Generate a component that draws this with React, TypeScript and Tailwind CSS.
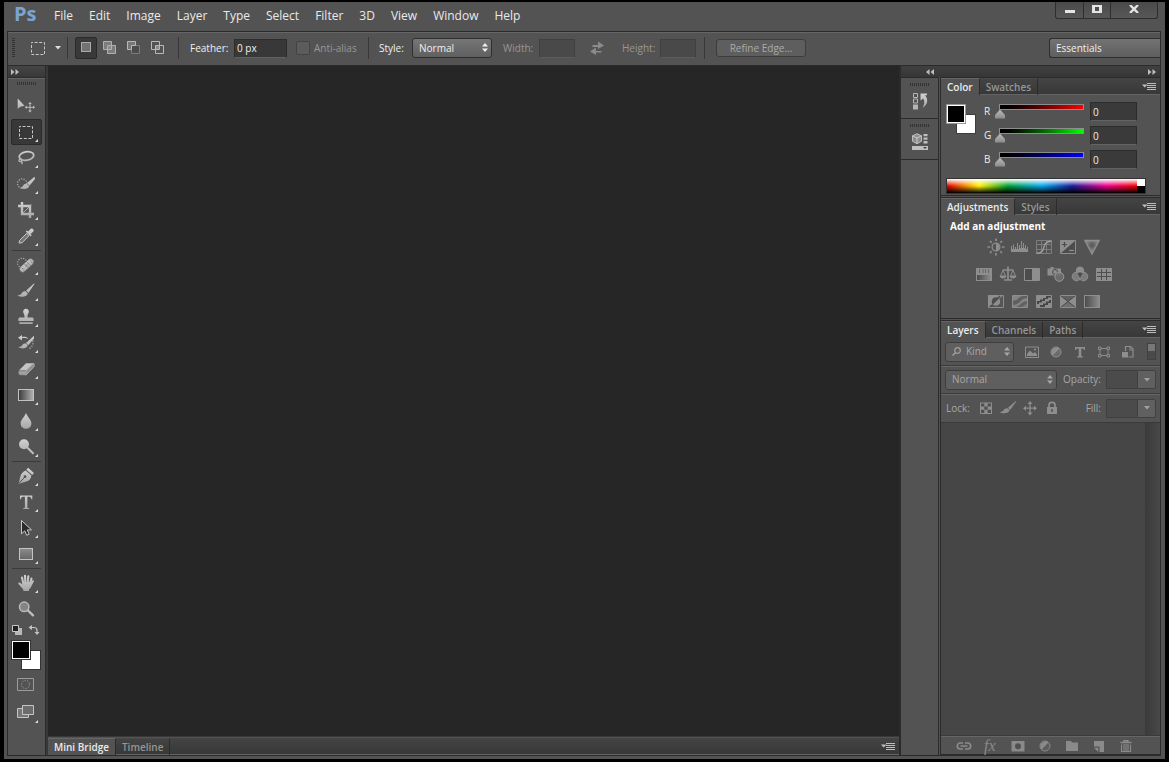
import type { ReactNode } from "react";
import clsx from "clsx";

const menus = ["File", "Edit", "Image", "Layer", "Type", "Select", "Filter", "3D", "View", "Window", "Help"];

const L = "url(#light)";
const G = "#8e8e8e";

function Icon({ children, className }: { children: ReactNode; className?: string }) {
    return (
        <svg viewBox="0 0 18 18" fill="none" aria-hidden="true" className={clsx("size-[18px] shrink-0", className)}>
            {children}
        </svg>
    );
}

/* gradients shared by every icon on the page */
function Gradients() {
    return (
        <svg className="absolute size-0" aria-hidden="true">
            <defs>
                <linearGradient id="light" gradientUnits="userSpaceOnUse" x1="0" y1="1" x2="0" y2="17">
                    <stop offset="0" stopColor="#d2d2d2" />
                    <stop offset="1" stopColor="#a6a6a6" />
                </linearGradient>
                <linearGradient id="box" x1="0" y1="0" x2="0" y2="1">
                    <stop offset="0" stopColor="#8b8b8b" />
                    <stop offset="1" stopColor="#666" />
                </linearGradient>
                <linearGradient id="ramp">
                    <stop offset="0" stopColor="#3a3a3a" />
                    <stop offset="1" stopColor="#b4b4b4" />
                </linearGradient>
                <linearGradient id="rampDim">
                    <stop offset="0" stopColor="#4a4a4a" />
                    <stop offset="1" stopColor="#8e8e8e" />
                </linearGradient>
                <radialGradient id="vibrance" cx=".5" cy=".35" r=".5">
                    <stop offset="0" stopColor="#555" />
                    <stop offset="1" stopColor="#8e8e8e" />
                </radialGradient>
            </defs>
        </svg>
    );
}

const brush = (
    <>
        <path d="M17.3 1.2 9.2 8.6l2.2 2.3 6-8.9z" fill={L} />
        <path d="M8.6 9.3c-1.4-.2-2.7.3-3.5 1.5-.8 1.3-2 2.2-4.6 2.5 2.2 1.6 5.8 2.1 8.2.8 1.3-.7 1.9-1.7 2-2.8z" fill={L} />
    </>
);

const marquee = <rect x="2.5" y="3.5" width="13" height="12" stroke="#c8c8c8" strokeDasharray="3 1.6" strokeDashoffset="1.5" />;

type Tool = { name: string; icon: ReactNode; single?: boolean };

const toolGroups: Tool[][] = [
    [
        {
            name: "Move",
            single: true,
            icon: (
                <>
                    <path d="M.7 1.5v10.6l2.6-2.4 4.2-.9z" fill={L} />
                    <path d="M13 6v8.6M8.8 10.3h8.4" stroke="#bbb" />
                    <path d="m13 5-1.8 2h3.6zM13 15.6l-1.8-2h3.6zM7.800 10.3l2-1.8v3.6zM18 10.3l-2-1.8v3.6z" fill="#bbb" />
                </>
            ),
        },
        { name: "Rectangular Marquee", icon: marquee },
        {
            name: "Lasso",
            icon: (
                <>
                    <ellipse cx="9.5" cy="7" rx="7.3" ry="4.2" transform="rotate(-9 9.5 7)" stroke={L} strokeWidth="1.8" />
                    <path d="M3 10c-1.6.7-1.4 2.4.3 2.5 1.4 0 2-.9 1-1.7M4 12.200c1.4.8 1.7 1.7.6 3" stroke="#b8b8b8" strokeWidth="1.3" />
                </>
            ),
        },
        {
            name: "Quick Selection",
            icon: (
                <>
                    <circle cx="5.2" cy="8.500" r="4.6" stroke="#bbb" strokeWidth="1.2" strokeDasharray="1.1 1.4" />
                    <path d="m17.500 1.800-7.500 6.200 2.400 2.700L18 4z" fill={L} />
                    <path d="M9.600 8.800c-1.700-.2-2.800.7-3.400 1.800-.5 1-1.400 1.700-2.800 2.300 2.100 1.400 5.400 1.500 7.200.2 1-.6 1.500-1.400 1.500-2.200z" fill={L} />
                </>
            ),
        },
        {
            name: "Crop",
            icon: (
                <>
                    <path d="M5 1v12h12M1 5h12v12" stroke={L} strokeWidth="2.4" />
                    <path d="m5.5 12.5 9-9" stroke="#b5b5b5" strokeWidth=".9" />
                </>
            ),
        },
        {
            name: "Eyedropper",
            icon: (
                <>
                    <path d="m2 16 .6-2.6 7-7 2.4 2.4-7 7z" stroke="#c8c8c8" fill="#777" />
                    <path d="m8.7 4.6 4.9 4.9 1.2-1.2-1.1-1.2 2.7-2.7c1.2-1.3-1.3-3.8-2.6-2.6l-2.7 2.7-1.2-1.1z" fill={L} />
                </>
            ),
        },
    ],
    [
        {
            name: "Spot Healing Brush",
            icon: (
                <>
                    <circle cx="5.3" cy="7" r="4.7" stroke="#bbb" strokeWidth="1.1" strokeDasharray="1.1 1.4" />
                    <rect x="1.2" y="6.2" width="17" height="6.4" rx="3.2" transform="rotate(-43 9.7 9.4)" fill={L} stroke="#535353" strokeWidth=".5" />
                    <path d="m7 7.5 4.7 4.7M9.4 5.3l4.7 4.7" stroke="#777" strokeWidth=".7" />
                    <path d="M10 7.8v.9M9 9.5v.9M11 9.5v.9M13.8 4.5v.9M15 6v.9M5.5 12v.9M6.8 13.5v.8" stroke="#666" />
                </>
            ),
        },
        { name: "Brush", icon: brush },
        {
            name: "Clone Stamp",
            icon: (
                <path
                    d="M9 .8a2.9 2.9 0 0 0-2.7 3.9c.5 1.2 1.2 2 1.2 3.3v1.4H3c-1 0-1.6.6-1.6 1.6v2h15.2v-2c0-1-.6-1.6-1.6-1.6h-4.5V8c0-1.300.7-2.1 1.2-3.3A2.9 2.9 0 0 0 9 .8zM2.3 14.3h13.4V16H2.3z"
                    fill={L}
                />
            ),
        },
        {
            name: "History Brush",
            icon: (
                <>
                    <path d="M1 3.8 5 1v1.9c3-.5 5 .1 6.3 1.8-2.1-.9-4-.9-6.3-.6v2.3z" fill={L} />
                    <path d="m17 1.8-8 7.100 2.300 2.300L17 4.500z" fill={L} />
                    <path d="M8.8 9.6c-1.4-.2-2.7.3-3.4 1.3-.8 1.1-1.8 1.9-4.2 2.1 2 1.4 5.3 1.9 7.5.8 1.3-.6 1.8-1.4 1.9-2.5z" fill={L} />
                    <path d="M15.7 6.5c1 3.3-.4 6.7-4 8.4" stroke="#bbb" strokeWidth="1.2" strokeDasharray="1.2 1.5" />
                </>
            ),
        },
        {
            name: "Eraser",
            icon: (
                <>
                    <path d="M9 3.2h7.6l-7.8 7.6H1.6z" fill="#c4c4c4" />
                    <path d="M1.6 10.8h7.2v4.4H2.9c-1.4 0-1.9-2-1.3-4.4z" fill="#a2a2a2" stroke="#555" strokeWidth=".5" />
                    <path d="m8.8 10.8 7.8-7.6c.9 1 .9 3-.1 4.1l-7.7 7.9z" fill="#8f8f8f" stroke="#c4c4c4" strokeWidth=".7" />
                </>
            ),
        },
        { name: "Gradient", icon: <rect x="1.5" y="3.5" width="15" height="11" fill="url(#ramp)" stroke="#c2c2c2" /> },
        { name: "Blur", icon: <path d="M9 .8c.8 3.4 5.4 7 5.4 10.6a5.4 5.4 0 0 1-10.8 0C3.6 7.8 8.2 4.2 9 .8z" fill={L} /> },
        {
            name: "Dodge",
            icon: (
                <>
                    <circle cx="7" cy="6.3" r="5" fill={L} />
                    <path d="m10.5 9.8 5.5 5.4" stroke="#bdbdbd" strokeWidth="2" strokeLinecap="round" />
                </>
            ),
        },
    ],
    [
        {
            name: "Pen",
            icon: (
                <>
                    <path d="m11.2.8 5.8 5.3-1.7 2-6-5.4z" fill={L} />
                    <path d="m8.7 3.5 5.7 5.1c-.3 3.2-2 5.2-5 5.9l-7.7 2.2 1.6-7.2c.7-2.7 2.5-4.8 5.4-6z" fill={L} />
                    <path d="m2.3 16 5.2-5.6" stroke="#535353" />
                    <circle cx="8" cy="9.7" r="1.4" fill="#535353" />
                </>
            ),
        },
        {
            name: "Horizontal Type",
            icon: <path d="M3 2.5h12.3v3.8h-.9c-.3-1.9-1-2.500-3-2.500h-1v10.1c0 .9.4 1.2 1.900 1.3v.8H6v-.8c1.5-.1 1.9-.4 1.9-1.3V3.8h-1c-2 0-2.7.6-3 2.5H3z" fill={L} />,
        },
        { name: "Path Selection", icon: <path d="M4.5 1.5v13.3l3.3-3 1.9 4.5 2.5-1.1-1.9-4.3h4.2z" fill="#2b2b2b" stroke="#c8c8c8" /> },
        { name: "Rectangle", icon: <rect x="2.5" y="3.5" width="13" height="11" fill="url(#box)" stroke="#c4c4c4" /> },
    ],
    [
        {
            name: "Hand",
            icon: (
                <>
                    <path d="M6.2 9 5 3.5M8.3 8.500 8 1.8M10.7 8.5l.6-6.200M13 9.5l1.5-5" stroke={L} strokeWidth="2.1" strokeLinecap="round" />
                    <path d="M5.2 8h8.9l1.3-1.6c.8-.5 1.8.1 1.4 1.1l-2.2 4.2c-.7 1.7-1.6 3-2.6 3.7v1.7H6.3v-1.5L1.5 10c-.7-1.2.7-2 1.7-1.3l2.2 1.8z" fill={L} />
                </>
            ),
        },
        {
            name: "Zoom",
            single: true,
            icon: (
                <>
                    <circle cx="7.2" cy="6.8" r="4.7" fill="#848484" stroke="#b9b9b9" strokeWidth="1.5" />
                    <path d="m11 10.5 5 4.8" stroke="#bdbdbd" strokeWidth="2.4" strokeLinecap="round" />
                </>
            ),
        },
    ],
];

const adjustments: Tool[][] = [
    [
        {
            name: "Brightness/Contrast",
            icon: (
                <>
                    <circle cx="9" cy="9" r="3.9" stroke={G} strokeWidth="1.3" />
                    <path d="M9 5.5v7a3.5 3.5 0 0 0 0-7z" fill={G} />
                    <path d="M9 .5V3M9 15v2.5M.5 9H3M15 9h2.5M3 3l1.7 1.7M13.3 13.3 15 15M3 15l1.7-1.7M13.3 4.7 15 3" stroke={G} strokeWidth="1.7" />
                </>
            ),
        },
        {
            name: "Levels",
            icon: <path d="M0 14V8h1v3h1V6.5h1V11h1V9h1v2h1V5h1v6h1V7h1v3h1V3h1v7h1V5h1v5h1V7h1v4h1V9h1v5z" fill={G} />,
        },
        {
            name: "Curves",
            icon: (
                <>
                    <path d="M1.5 2.5h15v13h-15zM6.5 2.5v13M11.5 2.5v13M1.5 6.5h15M1.5 11.5h15" stroke="#7d7d7d" />
                    <path d="M1.5 15.2c7.5 0 6.5-5 8-8 1.3-2.8 3.5-4 7-4" stroke="#a0a0a0" strokeWidth="1.4" />
                </>
            ),
        },
        {
            name: "Exposure",
            icon: (
                <>
                    <path d="M1.5 2.5h15v13h-15z" stroke={G} fill="#4c4c4c" />
                    <path d="M1.5 2.5h15l-15 13z" fill={G} />
                    <path d="M3 6.5h5M5.5 4v5" stroke="#4b4b4b" strokeWidth="1.2" />
                    <path d="M10 12.5h5" stroke={G} strokeWidth="1.2" />
                </>
            ),
        },
        { name: "Vibrance", icon: <path d="M1.8 2.5h14.4L9 16z" fill="url(#vibrance)" stroke={G} strokeWidth="1.3" /> },
    ],
    [
        {
            name: "Hue/Saturation",
            icon: (
                <>
                    <path d="M1 3h16v13H1z" fill={G} />
                    <path d="M4.500 4v4M8 4v4M10.5 4v4M13.5 4v4" stroke="#666" />
                    <path d="M2 10h14v5H2z" fill="url(#rampDim)" />
                </>
            ),
        },
        {
            name: "Color Balance",
            icon: (
                <>
                    <path d="M9 1.5v13M3.5 5h11M5 15h8" stroke={G} strokeWidth="1.7" />
                    <path d="M4 5.5 1.5 11h5zM14 5.5 11.5 11h5z" stroke={G} />
                    <path d="M.6 11h6.8c0 3.3-6.8 3.3-6.8 0zM10.6 11h6.8c0 3.3-6.8 3.3-6.8 0z" fill={G} />
                </>
            ),
        },
        {
            name: "Black & White",
            icon: (
                <>
                    <path d="M1.5 3.5h15v12h-15z" stroke={G} fill="#4c4c4c" />
                    <path d="M9 3.5h7.5v12H9z" fill={G} />
                </>
            ),
        },
        {
            name: "Photo Filter",
            icon: (
                <>
                    <path d="M.5 3.5h3V2h3v1.5H14v7H.5z" fill={G} />
                    <circle cx="8" cy="7" r="2.5" stroke="#4e4e4e" />
                    <circle cx="12.3" cy="11.8" r="4.5" fill="#727272" fillOpacity=".8" stroke="#999" />
                </>
            ),
        },
        {
            name: "Channel Mixer",
            icon: (
                <>
                    <circle cx="9" cy="5.8" r="4.2" fill={G} />
                    <circle cx="5.5" cy="11.5" r="4.3" fill="#7c7c7c" stroke={G} />
                    <circle cx="12.5" cy="11.5" r="4.3" fill="#7c7c7c" stroke={G} />
                    <path d="M6.5 8.2 9 7.2l2.5 1L9 13z" fill="#4c4c4c" />
                </>
            ),
        },
        {
            name: "Color Lookup",
            icon: (
                <>
                    <path d="M1 3h16v13H1z" fill={G} />
                    <path d="M6.5 4v11M11.5 4v11M2 7.5h14M2 11.5h14" stroke="#4e4e4e" />
                </>
            ),
        },
    ],
    [
        {
            name: "Invert",
            icon: (
                <>
                    <path d="M1.5 3.5h15v12h-15z" stroke={G} fill="#555" />
                    <path d="M1.5 3.5h14.500l-14.5 12z" fill={G} />
                    <circle cx="9" cy="9.5" r="4.300" fill="#4d4d4d" />
                    <path d="M6 12.5a4.200 4.200 0 0 0 6-6z" fill={G} />
                    <path d="m13 4-2 2M5 13l-2 2" stroke="#4d4d4d" strokeWidth="1.500" />
                </>
            ),
        },
        {
            name: "Posterize",
            icon: (
                <>
                    <path d="M1.5 3.5h15v12h-15z" fill="#606060" stroke={G} />
                    <path d="M2 8.500c5 0 5-3.500 10-4.500H2zM2 13c8-.5 6-5.500 14-7v3c-7 1-6 5.500-13 6H2z" fill="#858585" />
                    <path d="M10 15c2-.500 3-2.500 6-3.500V15z" fill="#787878" />
                </>
            ),
        },
        {
            name: "Threshold",
            icon: (
                <>
                    <path d="M1.5 3.5h15v12h-15z" fill={G} stroke={G} />
                    <path d="M2 9h3V7.500h3V6h3V4h5v1.500h-3V7h-3v2H7v1.500H4V12H2zM5 15v-2h3v-1.500h3V9.500h3V8h2v3h-3v2h-3v2z" fill="#464646" />
                </>
            ),
        },
        {
            name: "Selective Color",
            icon: (
                <>
                    <path d="M1.5 3.5h15v12h-15z" stroke={G} fill="#707070" />
                    <path d="M2 4h14L9 9.500z" fill="#606060" />
                    <path d="M1.5 3.5 9 9.5l-7.5 6zM16.5 3.5 9 9.5l7.5 6z" fill={G} />
                    <path d="m2 4 14 11M16 4 2 15" stroke="#484848" />
                </>
            ),
        },
        { name: "Gradient Map", icon: <rect x="1.5" y="3.5" width="15" height="12" fill="url(#rampDim)" stroke={G} /> },
    ],
];

const footerIcons: Tool[] = [
    {
        name: "Link layers",
        icon: <path d="M8 6H5.300a3 3 0 0 0 0 6H8M10 6h2.700a3 3 0 0 1 0 6H10M5.5 9h7" stroke="#8a8a8a" strokeWidth="1.7" />,
    },
    {
        name: "Layer style",
        icon: (
            <text x="2" y="14" fill="#8a8a8a" fontFamily="Liberation Serif, serif" fontStyle="italic" fontSize="16">
                fx
            </text>
        ),
    },
    {
        name: "Add mask",
        icon: (
            <>
                <path d="M2.5 4h13v10.5h-13z" fill="#8a8a8a" />
                <circle cx="9" cy="9.2" r="3" fill="#505050" />
            </>
        ),
    },
    {
        name: "New adjustment layer",
        icon: (
            <>
                <circle cx="9" cy="9" r="5" fill="#5c5c5c" stroke="#8a8a8a" />
                <path d="M5.5 12.5a5 5 0 0 1 7-7z" fill="#8a8a8a" />
            </>
        ),
    },
    { name: "New group", icon: <path d="M3 4h5l1 1.5h6V14H3z" fill="#8a8a8a" /> },
    { name: "New layer", icon: <path d="M4 4h10v11H9.5V9.5H4zM4 10.7h4.3V15z" fill="#8a8a8a" /> },
    {
        name: "Delete layer",
        icon: (
            <>
                <path d="M3.500 5.5h11M7 5V3.7h4V5" stroke="#8a8a8a" strokeWidth="1.4" />
                <path d="M4.5 7.5v7h9v-7M7 7v7M9 7v7M11 7v7" stroke="#8a8a8a" strokeWidth="1.1" />
            </>
        ),
    },
];

const layerFilters: Tool[] = [
    {
        name: "Filter pixel layers",
        icon: (
            <>
                <path d="M2.5 4h13v10.5h-13z" stroke={G} />
                <path d="M4 13v-2l3-3.5 3 3 2-1.5 2 2.5V13z" fill={G} />
                <circle cx="12" cy="6.5" r="1.1" fill={G} />
            </>
        ),
    },
    {
        name: "Filter adjustment layers",
        icon: (
            <>
                <circle cx="9" cy="9" r="5" fill="#6b6b6b" stroke={G} />
                <path d="M5.5 12.5a5 5 0 0 1 7-7z" fill={G} />
            </>
        ),
    },
    { name: "Filter type layers", icon: <path d="M4 4h10v3h-1c-.2-1.2-.7-1.6-2.7-1.6V13l1.5.6v.9H6.2v-.9l1.5-.6V5.4C5.7 5.4 5.2 5.8 5 7H4z" fill={G} /> },
    {
        name: "Filter shape layers",
        icon: (
            <>
                <path d="M5 5.5h8v7H5z" stroke={G} />
                <path d="M3.5 4H6v2.5H3.5zM12 4h2.5v2.5H12zM3.5 11.5H6V14H3.5zM12 11.5h2.5V14H12z" fill="#535353" stroke={G} />
            </>
        ),
    },
    {
        name: "Filter smart objects",
        icon: (
            <>
                <path d="M6.5 8V3.5h5L14 6v8H9.5" stroke={G} strokeWidth="1.2" />
                <path d="M11 3.5V7h3" stroke={G} />
                <path d="M3 9h6v5.5H3z" fill={G} />
            </>
        ),
    },
];

const locks: Tool[] = [
    {
        name: "Lock transparent pixels",
        icon: (
            <>
                <path d="M3 3.5h12V15H3z" fill={G} />
                <path d="M4 4.5h3.3v3H4zM10.6 4.5H14v3h-3.4zM7.3 7.5h3.3v3.3H7.3zM4 10.8h3.3V14H4zM10.6 10.8H14V14h-3.4z" fill="#505050" />
            </>
        ),
    },
    {
        name: "Lock image pixels",
        icon: <path d="M16.8 2 9 8.7l2 2.2 6-8zM8.5 9.3c-2-.2-3 .6-3.7 1.7-.7 1-1.8 1.8-4 2.2 3 1.8 9.2 1.5 9.7-1.9z" fill={G} />,
    },
    {
        name: "Lock position",
        icon: (
            <>
                <path d="M9 4v10.5M3.7 9.2h10.6" stroke={G} strokeWidth="1.3" />
                <path d="M9 2 6.5 5h5zM9 16.5l-2.5-3h5zM2 9.2l3-2.5v5zM16 9.2l-3-2.5v5z" fill={G} />
            </>
        ),
    },
    {
        name: "Lock all",
        icon: (
            <>
                <path d="M6 8V6c0-3.5 6-3.5 6 0v2" stroke={G} strokeWidth="1.7" />
                <path d="M4 8h10v7H4z" fill={G} />
                <path d="M9 10v3" stroke="#505050" strokeWidth="1.5" />
            </>
        ),
    },
];

const channels = [
    { name: "R", track: "from-black to-[#ff0000]" },
    { name: "G", track: "from-black to-[#00ff00]" },
    { name: "B", track: "from-black to-[#0000ff]" },
];

function Sorter() {
    return (
        <svg viewBox="0 0 6 9" aria-hidden="true" className="pointer-events-none absolute right-1 top-[5px] h-[9px] w-[6px]">
            <path d="M3 0 0 3.5h6zM3 9 0 5.5h6z" fill="currentColor" />
        </svg>
    );
}

function Chevrons({ left }: { left?: boolean }) {
    return (
        <svg viewBox="0 0 8 6" aria-hidden="true" className={clsx("h-[6px] w-2", left && "rotate-180")}>
            <path d="m0 0 3.5 3L0 6zM4.5 0 8 3 4.5 6z" fill="#bdbdbd" />
        </svg>
    );
}

function PanelMenu() {
    return (
        <button type="button" aria-label="Panel menu" className="ml-auto mr-1 flex items-center">
            <svg viewBox="0 0 14 9" className="h-[9px] w-[14px]">
                <path d="M0 2.5h5.5L2.7 5.5z" fill="#bdbdbd" />
                <path d="M5 1.5h9M5 3.5h9M5 5.5h9M5 7.5h9" stroke="#bdbdbd" />
            </svg>
        </button>
    );
}

function Tabs({ items }: { items: string[] }) {
    return (
        <div role="tablist" className="flex h-[17px] shrink-0 border-b border-[#646464] bg-linear-to-b from-[#444] to-[#383838]">
            {items.map((item, i) => (
                <button
                    key={item}
                    type="button"
                    role="tab"
                    aria-selected={i === 0}
                    className={clsx(
                        "h-[17px] border-r border-t border-r-[#2c2c2c] px-[6px] pb-px font-semibold leading-[14px]",
                        i === 0 ? "border-t-[#666] bg-[#535353] text-[#ececec]" : "border-t-[#484848] text-[#969696]",
                    )}
                >
                    {item}
                </button>
            ))}
            <PanelMenu />
        </div>
    );
}

function Grip() {
    return <div className="h-[3px] w-[19px] bg-[repeating-linear-gradient(90deg,#333_0_1px,transparent_1px_2px)]" />;
}

function Divider() {
    return <div className="h-[22px] w-px shrink-0 bg-[#383838]" />;
}

function IconButton({ tool }: { tool: Tool }) {
    return (
        <button type="button" aria-label={tool.name}>
            <Icon>{tool.icon}</Icon>
        </button>
    );
}

function TitleBar() {
    return (
        <header className="flex h-[29px] pl-[10px] pr-[7px]">
            <span className="w-[32px] text-[20px] font-bold leading-[24px] text-[#7ba4d2]">Ps</span>
            <nav className="flex flex-1 items-center gap-4 pb-[2px] pl-2 text-[12px] text-[#eaeaea]">
                {menus.map((menu) => (
                    <button type="button" key={menu} className="leading-[16px]">
                        {menu}
                    </button>
                ))}
            </nav>
            <div className="flex h-[17px] rounded-b-[3px] border border-t-0 border-[#2e2e2e] bg-linear-to-b from-[#4a4a4a] to-[#575757]">
                <button type="button" aria-label="Minimize" className="flex w-[28px] justify-center border-r border-[#2e2e2e] pt-2">
                    <span className="h-[3px] w-[10px] bg-[#e4e4e4]" />
                </button>
                <button type="button" aria-label="Maximize" className="flex w-[27px] justify-center border-r border-[#2e2e2e] pt-[3px]">
                    <span className="h-2 w-[10px] border-x-[3px] border-y-2 border-[#e4e4e4]" />
                </button>
                <button type="button" aria-label="Close" className="flex w-[46px] justify-center pt-[3px]">
                    <svg viewBox="0 0 10 8" className="h-2 w-[10px]">
                        <path d="m1 0 8 8M9 0 1 8" stroke="#e4e4e4" strokeWidth="2.4" />
                    </svg>
                </button>
            </div>
        </header>
    );
}

function OptionsBar() {
    return (
        <div className="flex h-[33px] items-center border-t border-[#666] pb-[2px] pl-1 text-[#f0f0f0]">
            <div className="h-5 w-[3px] bg-[repeating-linear-gradient(#333_0_1px,transparent_1px_2px)]" />
            <button type="button" aria-label="Tool preset" className="ml-[14px] flex items-center gap-2">
                <Icon>{marquee}</Icon>
                <svg viewBox="0 0 6 4" className="h-1 w-[6px]">
                    <path d="M0 0h6L3 3.5z" fill="#ddd" />
                </svg>
            </button>
            <div className="ml-[6px] flex items-center">
                <Divider />
                <div className="ml-[7px] flex items-center gap-[3px]">
                    <button type="button" aria-label="New selection" className="flex size-[22px] items-center justify-center rounded-[2px] border border-[#2a2a2a] bg-[#393939]">
                        <Icon>
                            <rect x="4.5" y="3.5" width="9" height="9" fill="#727272" stroke="#aaa" />
                        </Icon>
                    </button>
                    <div className="flex gap-[6px]">
                        <button type="button" aria-label="Add to selection">
                            <Icon>
                                <path d="M3.5 2.5h8v8h-8zM7.5 6.5h8v8h-8z" fill="#7c7c7c" stroke="#b0b0b0" />
                                <path d="M8 7h3v3H8z" fill="#8c8c8c" />
                            </Icon>
                        </button>
                        <button type="button" aria-label="Subtract from selection">
                            <Icon>
                                <path d="M7.5 6.5h8v8h-8z" fill="#4c4c4c" stroke="#7b7b7b" />
                                <path d="M7.5 10.5h-4v-8h8v4h-4z" fill="#777" stroke="#b8b8b8" />
                            </Icon>
                        </button>
                        <button type="button" aria-label="Intersect with selection">
                            <Icon>
                                <path d="M3.5 2.5h8v8h-8zM7.5 6.5h8v8h-8z" stroke="#b8b8b8" />
                                <path d="M8 7h3v3H8z" fill="#8c8c8c" />
                            </Icon>
                        </button>
                    </div>
                </div>
            </div>
            <div className="ml-3 flex items-center">
                <Divider />
                <label htmlFor="feather" className="ml-[11px] w-11 whitespace-nowrap">
                    Feather:
                </label>
                <input id="feather" defaultValue="0 px" className="h-[19px] w-[53px] border border-[#2c2c2c] border-b-[#606060] bg-[#383838] px-[2px]" />
                <label className="ml-[9px] flex w-[60px] items-center gap-1 whitespace-nowrap text-[#979797]">
                    <input type="checkbox" disabled className="size-[14px] shrink-0 appearance-none rounded-[2px] border border-[#434343] bg-[#5c5c5c]" />
                    Anti-alias
                </label>
            </div>
            <div className="ml-3 flex items-center">
                <Divider />
                <label htmlFor="style" className="ml-[10px] w-[33px]">
                    Style:
                </label>
                <div className="relative">
                    <select id="style" className="block h-5 w-20 appearance-none rounded-[3px] border border-[#2f2f2f] bg-linear-to-b from-[#767676] to-[#606060] px-[6px]">
                        <option>Normal</option>
                    </select>
                    <Sorter />
                </div>
                <label htmlFor="width" className="ml-[11px] w-9 text-[#979797]">
                    Width:
                </label>
                <input id="width" disabled className="h-[19px] w-9 border border-[#404040] border-b-[#5c5c5c] bg-[#494949]" />
                <button type="button" aria-label="Swap width and height" className="ml-[13px]">
                    <Icon>
                        <path d="M4.5 6H10V2.500l6 4-6 3.500V8H4.5zM13.500 13.500H8v2.500l-6-3.500 6-4v3.500h5.500z" fill="#8b8b8b" />
                    </Icon>
                </button>
                <label htmlFor="height" className="ml-4 w-[38px] text-[#979797]">
                    Height:
                </label>
                <input id="height" disabled className="h-[19px] w-9 border border-[#404040] border-b-[#5c5c5c] bg-[#494949]" />
            </div>
            <div className="ml-2 flex items-center">
                <Divider />
                <button type="button" className="ml-[11px] h-[18px] w-[90px] rounded-[3px] border border-[#3d3d3d] bg-[#5e5e5e] leading-[14px] text-[#aaa]">
                    Refine Edge...
                </button>
            </div>
            <select aria-label="Workspace" className="ml-auto h-5 w-[111px] appearance-none rounded-l-[3px] border border-r-0 border-[#2f2f2f] bg-linear-to-b from-[#737373] to-[#5e5e5e] px-[6px]">
                <option>Essentials</option>
            </select>
        </div>
    );
}

function Toolbox() {
    return (
        <aside className="flex w-[38px] shrink-0 flex-col border-r border-[#2c2c2c]">
            <div className="flex h-3 items-center border-b border-[#2c2c2c] bg-linear-to-b from-[#454545] to-[#383838] pl-[3px]">
                <Chevrons />
            </div>
            <div className="flex flex-1 flex-col items-center border-t border-[#666] pt-[3px]">
                <div className="h-[11px]">
                    <Grip />
                </div>
                {toolGroups.map((group, g) => (
                    <div key={g} className="flex flex-col items-center">
                        {g > 0 && <div className="my-px h-px w-[29px] bg-[#3b3b3b]" />}
                        {group.map((tool) => {
                            const active = tool.name === "Rectangular Marquee";
                            return (
                                <button
                                    key={tool.name}
                                    type="button"
                                    aria-label={tool.name}
                                    className={clsx(
                                        "relative flex h-[26px] w-[31px] items-center justify-center rounded-[2px] border pb-px pr-px",
                                        active ? "border-[#2a2a2a] bg-[#383838]" : "border-transparent",
                                    )}
                                >
                                    <Icon>{tool.icon}</Icon>
                                    {!tool.single && (
                                        <svg viewBox="0 0 3 3" className="absolute bottom-[2px] right-[3px] size-[3px]">
                                            <path d="M3 0v3H0z" fill="#ddd" />
                                        </svg>
                                    )}
                                </button>
                            );
                        })}
                    </div>
                ))}
                <div className="flex w-[31px] items-center justify-between pr-[2px] pt-[2px]">
                    <button type="button" aria-label="Default colors">
                        <svg viewBox="0 0 12 12" className="size-3">
                            <path d="M4 4h7v7H4z" fill="#b8b8b8" />
                            <path d="M1.5 1.5h6v6h-6z" fill="#222" stroke="#c8c8c8" />
                        </svg>
                    </button>
                    <button type="button" aria-label="Swap colors">
                        <svg viewBox="0 0 12 12" className="size-3">
                            <path d="M3 3.5h3q3 0 3 3v2" stroke="#c4c4c4" strokeWidth="1.2" fill="none" />
                            <path d="M4 1v5L.5 3.5zM6.500 8h5L9 11z" fill="#c4c4c4" />
                        </svg>
                    </button>
                </div>
                <div className="grid w-[31px] grid-cols-[10px_10px_10px] grid-rows-[10px_10px_10px] pt-1">
                    <button type="button" aria-label="Background color" className="col-span-2 col-start-2 row-span-2 row-start-2 border border-[#333] bg-white" />
                    <button type="button" aria-label="Foreground color" className="col-span-2 col-start-1 row-span-2 row-start-1 border border-[#333] bg-black shadow-[inset_0_0_0_1px_#fff]" />
                </div>
                <button type="button" aria-label="Quick mask" className="mt-[6px] w-[31px] pl-[5px]">
                    <Icon>
                        <path d="M1.5 2.5h16v12h-16z" stroke="#9c9c9c" />
                        <circle cx="9.500" cy="8.5" r="4" stroke="#aaa" strokeDasharray="1 1.5" />
                    </Icon>
                </button>
                <button type="button" aria-label="Screen mode" className="relative flex h-9 w-[31px] items-center pl-[5px]">
                    <Icon>
                        <path d="M1.5 5.5h11v9h-11z" fill="#777" stroke="#c4c4c4" />
                        <path d="M6.5 2.5h11v9h-11z" fill="#6c6c6c" stroke="#c4c4c4" />
                    </Icon>
                    <svg viewBox="0 0 3 3" className="absolute bottom-[7px] right-1 size-[3px]">
                        <path d="M3 0v3H0z" fill="#ddd" />
                    </svg>
                </button>
            </div>
        </aside>
    );
}

function ColorPanel() {
    return (
        <section className="border-y border-[#2b2b2b]">
            <Tabs items={["Color", "Swatches"]} />
            <div className="flex h-[83px] gap-2 pl-[5px] pt-[7px]">
                <div className="grid h-8 grid-cols-[10px_10px_10px] grid-rows-[10px_10px_10px] pt-[2px]">
                    <div className="col-span-2 col-start-2 row-span-2 row-start-2 border border-[#3d3d3d] bg-white" />
                    <div className="col-span-2 col-start-1 row-span-2 row-start-1 border border-[#999] bg-black shadow-[inset_0_0_0_1px_#fff]" />
                </div>
                <div className="flex flex-1 flex-col gap-[5px]">
                    {channels.map((c) => (
                        <div key={c.name} className="flex h-[19px] items-center">
                            <label htmlFor={c.name} className="w-[11px] text-[#eee]">
                                {c.name}
                            </label>
                            <div className="relative mr-[2px] h-[18px] w-[93px] px-1">
                                <div className={clsx("mt-px h-[6px] border border-[#8d8d8d] bg-linear-to-r", c.track)} />
                                <input
                                    id={c.name}
                                    type="range"
                                    min="0"
                                    max="255"
                                    defaultValue="0"
                                    className="absolute left-0 top-[7px] h-[9px] w-full appearance-none bg-transparent [&::-webkit-slider-thumb]:h-[9px] [&::-webkit-slider-thumb]:w-[10px] [&::-webkit-slider-thumb]:appearance-none [&::-webkit-slider-thumb]:bg-linear-to-b [&::-webkit-slider-thumb]:from-[#bbb] [&::-webkit-slider-thumb]:to-[#888] [&::-webkit-slider-thumb]:[clip-path:polygon(50%_0,100%_60%,100%_100%,0_100%,0_60%)]"
                                />
                            </div>
                            <input aria-label={`${c.name} value`} defaultValue="0" className="h-[19px] w-[47px] border border-[#2c2c2c] border-b-[#636363] bg-[#3a3a3a] px-[2px] text-[#eee]" />
                        </div>
                    ))}
                </div>
            </div>
            <div className="mb-px ml-[5px] flex h-4 w-[200px] border border-[#333]">
                <div className="flex-1 bg-[linear-gradient(#fff,transparent_50%,#000),linear-gradient(90deg,#e00000,#fff200_17%,#00a030_32%,#00a8f0_50%,#1c1c98_66%,#f0008c_84%,#f00000)]" />
                <div className="h-full w-2 bg-linear-to-b from-white from-50% to-black to-50%" />
            </div>
        </section>
    );
}

function AdjustmentsPanel() {
    return (
        <section className="border-y border-[#2b2b2b]">
            <Tabs items={["Adjustments", "Styles"]} />
            <h2 className="h-[23px] pl-[9px] font-bold leading-[22px] text-white">Add an adjustment</h2>
            <div className="flex h-20 flex-col items-center gap-[9px] pr-[14px]">
                {adjustments.map((row, i) => (
                    <div key={i} className="flex gap-[6px]">
                        {row.map((tool) => (
                            <IconButton key={tool.name} tool={tool} />
                        ))}
                    </div>
                ))}
            </div>
        </section>
    );
}

function PercentField({ id, label }: { id: string; label: string }) {
    return (
        <div className="ml-auto mr-1 flex items-center gap-[5px]">
            <label htmlFor={id}>{label}</label>
            <div className="flex">
                <input id={id} disabled className="h-[19px] w-[31px] border border-r-0 border-[#404040] bg-[#4b4b4b]" />
                <button type="button" aria-label={`${label} slider`} className="flex h-[19px] w-[19px] items-center justify-center rounded-r-[2px] border border-[#404040] bg-[#606060]">
                    <svg viewBox="0 0 6 4" className="h-1 w-[6px]">
                        <path d="M0 0h6L3 3.5z" fill="#a0a0a0" />
                    </svg>
                </button>
            </div>
        </div>
    );
}

function LayersPanel() {
    return (
        <section className="flex flex-1 flex-col border-y border-[#2b2b2b] text-[#a8a8a8]">
            <Tabs items={["Layers", "Channels", "Paths"]} />
            <div className="flex h-[27px] items-center pl-1">
                <div className="relative">
                    <svg viewBox="0 0 9 9" className="pointer-events-none absolute left-[7px] top-[5px] size-[9px]">
                        <circle cx="5.5" cy="3.5" r="2.8" fill="none" stroke="#a0a0a0" strokeWidth="1.2" />
                        <path d="M3.5 5.5.5 8.5" stroke="#a0a0a0" strokeWidth="1.5" />
                    </svg>
                    <select aria-label="Filter type" className="block h-5 w-[69px] appearance-none rounded-[3px] border border-[#3e3e3e] bg-[#5f5f5f] pl-[20px]">
                        <option>Kind</option>
                    </select>
                    <Sorter />
                </div>
                <div className="ml-[9px] flex gap-[6px]">
                    {layerFilters.map((tool) => (
                        <IconButton key={tool.name} tool={tool} />
                    ))}
                </div>
                <button type="button" aria-label="Toggle filtering" className="ml-auto mr-1 flex h-[17px] w-[9px] items-start border border-[#414141] bg-[#4a4a4a]">
                    <span className="h-[7px] flex-1 bg-[#777]" />
                </button>
            </div>
            <div className="flex h-[28px] items-center border-t border-[#3c3c3c] pl-1 shadow-[inset_0_1px_#666]">
                <div className="relative">
                    <select aria-label="Blend mode" className="block h-5 w-[112px] appearance-none rounded-[3px] border border-[#3e3e3e] bg-[#5f5f5f] px-[6px]">
                        <option>Normal</option>
                    </select>
                    <Sorter />
                </div>
                <PercentField id="opacity" label="Opacity:" />
            </div>
            <div className="flex h-[29px] items-center border-t border-[#3c3c3c] pl-[5px] shadow-[inset_0_1px_#666]">
                <span className="w-[31px]">Lock:</span>
                <div className="flex gap-1">
                    {locks.map((tool) => (
                        <IconButton key={tool.name} tool={tool} />
                    ))}
                </div>
                <PercentField id="fill" label="Fill:" />
            </div>
            <div className="flex flex-1 justify-end border-y border-[#3a3a3a] bg-[#464646]">
                <div className="w-[15px] bg-linear-to-r from-[#3b3b3b] to-[#484848]" />
            </div>
            <div className="flex h-[18px] items-center justify-center gap-[9px] border-t border-[#666] pr-3">
                {footerIcons.map((tool) => (
                    <IconButton key={tool.name} tool={tool} />
                ))}
            </div>
        </section>
    );
}

function IconDock() {
    return (
        <div className="flex w-[38px] shrink-0 flex-col border-r border-t border-[#2b2b2b]">
            <button type="button" aria-label="History" className="flex h-[41px] flex-col items-center border-b border-[#2b2b2b] pt-[5px]">
                <Grip />
                <Icon className="mt-[6px]">
                    <path d="M2.5 1.5h4v4h-4zM2.5 7h4v4h-4z" stroke="#b5b5b5" />
                    <path d="M2 12.5h5v5H2z" fill="#b5b5b5" />
                    <path d="M9.500 1.5H16v1.800h-2c3.500 3.800 3 9.200-2.500 12.700 2-3.500 2.500-6.800.7-9.500L9.500 8.500z" fill={L} />
                </Icon>
            </button>
            <button type="button" aria-label="Properties" className="flex h-[41px] flex-col items-center border-b border-[#2b2b2b] pt-[5px]">
                <Grip />
                <Icon className="mt-[6px]">
                    <path d="m6 .8 4.5 2v5.500L6 10.7 1.5 8.3V2.8z" fill="#8c8c8c" stroke="#c0c0c0" />
                    <path d="M1.5 2.8 6 5l4.5-2.2M6 5v5.5" stroke="#c8c8c8" />
                    <path d="M12.5 1h4v2.3h-4zM12.5 4.5h4v2.3h-4zM12.5 8h4v2.5h-4z" fill="#c0c0c0" />
                    <path d="M1 13h16v4H1z" fill="#c0c0c0" />
                    <path d="M12 14h4l-2 2z" fill="#444" />
                </Icon>
            </button>
        </div>
    );
}

export default function App() {
    return (
        <div className="flex min-h-screen flex-col bg-black px-1 pb-[3px] pt-[2px] font-['Open_Sans','Noto_Sans',sans-serif] text-[10px]">
            <Gradients />
            <div className="flex flex-1 flex-col bg-[#535353]">
                <TitleBar />
                <div className="mb-[3px] ml-[3px] mr-1 flex flex-1 flex-col border border-[#2b2b2b]">
                    <OptionsBar />
                    <div className="flex flex-1 border-t border-[#2b2b2b]">
                        <Toolbox />
                        <main className="flex flex-1 flex-col border-l-2 border-r-2 border-[#383838] border-r-[#2b2b2b]">
                            <div className="flex-1 bg-[#262626]" />
                            <div className="border-t border-[#383838] pt-px">
                                <Tabs items={["Mini Bridge", "Timeline"]} />
                            </div>
                        </main>
                        <div className="flex shrink-0 flex-col">
                            <div className="flex h-[11px] items-center justify-between bg-linear-to-b from-[#404040] to-[#363636] pl-[25px] pr-1">
                                <Chevrons left />
                                <Chevrons />
                            </div>
                            <div className="flex flex-1">
                                <IconDock />
                                <div className="ml-px flex w-[220px] flex-col gap-px border-l border-[#2b2b2b]">
                                    <ColorPanel />
                                    <AdjustmentsPanel />
                                    <LayersPanel />
                                </div>
                            </div>
                        </div>
                    </div>
                </div>
            </div>
        </div>
    );
}
